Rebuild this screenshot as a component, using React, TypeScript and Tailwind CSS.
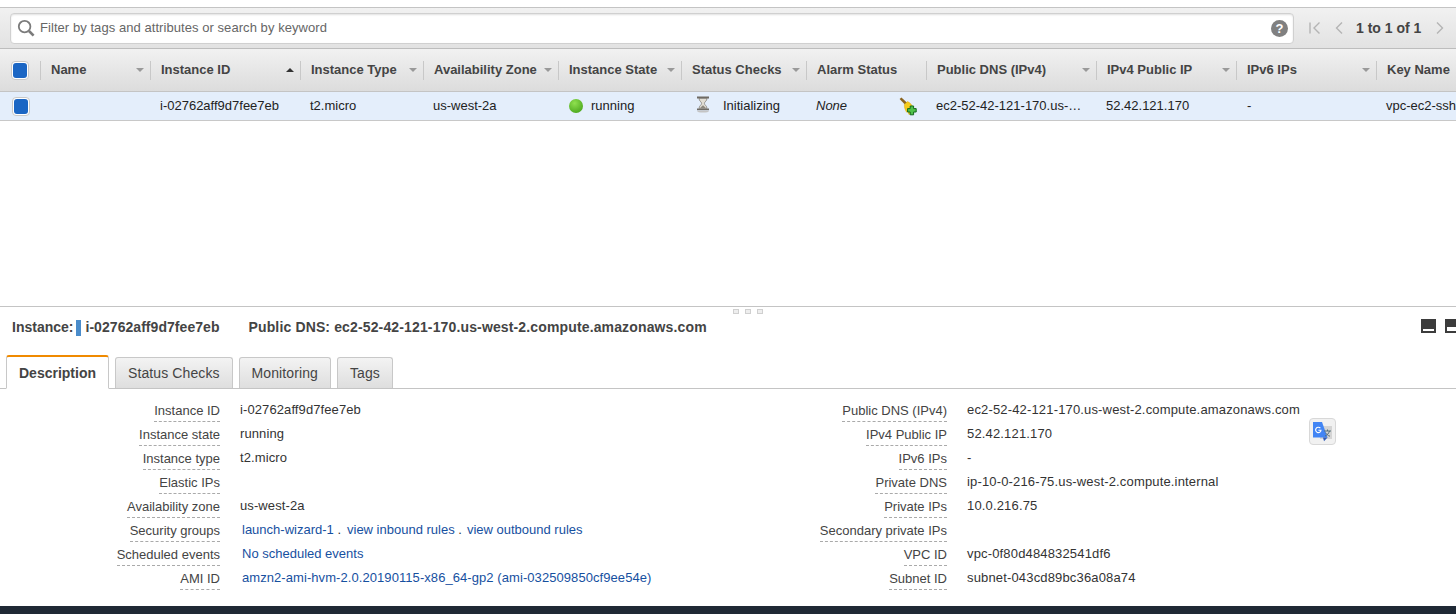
import React from "react";

const font = { fontFamily: '"Liberation Sans", Arial, sans-serif' };

const columns = [
  { label: "Name", width: "w-[110px]", sort: "down" },
  { label: "Instance ID", width: "w-[150px]", sort: "up" },
  { label: "Instance Type", width: "w-[123px]", sort: "down" },
  { label: "Availability Zone", width: "w-[135px]", sort: "down" },
  { label: "Instance State", width: "w-[123px]", sort: "down" },
  { label: "Status Checks", width: "w-[125px]", sort: "down" },
  { label: "Alarm Status", width: "w-[120px]", sort: "" },
  { label: "Public DNS (IPv4)", width: "w-[170px]", sort: "down" },
  { label: "IPv4 Public IP", width: "w-[140px]", sort: "down" },
  { label: "IPv6 IPs", width: "w-[140px]", sort: "down" },
  { label: "Key Name", width: "w-[140px]", sort: "" },
];

const leftRows = [
  ["Instance ID", "i-02762aff9d7fee7eb"],
  ["Instance state", "running"],
  ["Instance type", "t2.micro"],
  ["Elastic IPs", ""],
  ["Availability zone", "us-west-2a"],
];

const rightRows = [
  ["Public DNS (IPv4)", "ec2-52-42-121-170.us-west-2.compute.amazonaws.com"],
  ["IPv4 Public IP", "52.42.121.170"],
  ["IPv6 IPs", "-"],
  ["Private DNS", "ip-10-0-216-75.us-west-2.compute.internal"],
  ["Private IPs", "10.0.216.75"],
  ["Secondary private IPs", ""],
  ["VPC ID", "vpc-0f80d484832541df6"],
  ["Subnet ID", "subnet-043cd89bc36a08a74"],
  ["Network interfaces", "eth0"],
];

function Check() {
  return (
    <div className="w-[18px] h-[19px] rounded-[4px] bg-white border border-[#c8c8c8] flex items-center justify-center">
      <div className="w-[14px] h-[15px] rounded-[3px] bg-[#1b66c4]" />
    </div>
  );
}

function Label({ text }: { text: string }) {
  return (
    <div className="w-[220px] shrink-0 flex justify-end">
      <span className="h-[23px] pt-[3px] leading-[17px] text-[#444] border-b border-dashed border-[#aaa]">{text}</span>
    </div>
  );
}

function Hourglass() {
  return (
    <svg width="14" height="17" viewBox="0 0 14 17">
      <path d="M1 .6h12v1.8H1zM1 12.4h12v1.8H1z" fill="#6f6b64" />
      <path d="M3 2.4h8c0 2.6-2.6 3.4-2.6 5s2.6 2.4 2.6 5H3c0-2.6 2.6-3.4 2.6-5S3 5 3 2.4z" fill="#e2ded4" stroke="#77736b" strokeWidth="0.7" />
      <path d="M4.2 12.2c.6-1.6 2.2-2.2 2.8-3 .6.8 2.2 1.4 2.8 3z" fill="#8d887e" />
      <ellipse cx="7" cy="15.6" rx="6" ry="0.9" fill="#c4c4c4" />
    </svg>
  );
}

function AlarmIcon() {
  return (
    <svg width="19" height="19" viewBox="0 0 19 19">
      <path d="M.6 2 2.4.6 8.4 6 6.4 8z" fill="#8a6420" />
      <path d="M5.4 7.4 8.6 4.6C11 5.8 13.4 8 14 11L12 16.4 10 17.6 8.6 14.4 7.6 15.2C6 12.6 5.2 10 5.4 7.4z" fill="#f5cb1c" stroke="#d9a60e" strokeWidth="0.5" />
      <path d="M11.2 9h3.4v2.6h2.6V15h-2.6v2.8h-3.4V15H8.6v-3.4h2.6z" fill="#4fc24a" stroke="#14691c" strokeWidth="1" />
    </svg>
  );
}

function TranslateIcon() {
  return (
    <svg width="20" height="20" viewBox="0 0 20 20">
      <rect x="7" y="4" width="12" height="13" fill="#d4d4d4" />
      <path d="M0 0h9l5.5 15.5H0z" fill="#4285f4" />
      <path d="M10 15.5h4.5l-3.5 3.8z" fill="#2f5bb7" />
      <path d="M7.4 6.2A2.7 2.7 0 1 0 8 8.2H5.4" fill="none" stroke="#fff" strokeWidth="1.1" />
      <path d="M11 9h7M14.5 7.5v1.5M16.5 9c-.8 2.6-2.4 4.2-4.5 5M12.6 10.6c.8 1.6 2.2 3 4.4 3.6" fill="none" stroke="#55707a" strokeWidth="1" />
    </svg>
  );
}

export default function App() {
  return (
    <div className="w-[1456px] h-[614px] overflow-hidden bg-white flex flex-col relative text-[13px] text-[#333]" style={font}>
      <div className="h-[7px] shrink-0 bg-white" />

      {/* Filter bar */}
      <div className="h-[42px] shrink-0 border-t border-b border-t-[#c4c4c4] border-b-[#bdbdbd] bg-gradient-to-b from-[#f1f1f1] to-[#e2e2e2] flex items-center pl-[10px]">
        <div className="w-[1284px] h-[31px] bg-white border border-[#d0d0d0] rounded-[4px] flex items-center pl-[6px] pr-[5px] shadow-[inset_0_1px_2px_rgba(0,0,0,0.12)]">
          <svg width="18" height="18" viewBox="0 0 18 18" fill="none" stroke="#7b7b7b">
            <circle cx="7.6" cy="7.6" r="5.8" strokeWidth="1.8" />
            <path d="M12 12l4.6 4.6" strokeWidth="2.6" />
          </svg>
          <span className="ml-[5px] text-[#666] tracking-[0.06px]">Filter by tags and attributes or search by keyword</span>
          <div className="ml-auto w-[17px] h-[17px] rounded-full bg-[#808080] flex items-center justify-center text-white font-bold text-[13px] leading-none">?</div>
        </div>
        <div className="ml-[14px] flex items-center">
          <svg width="14" height="14" viewBox="0 0 14 14" fill="none" stroke="#b4b4b4" strokeWidth="1.4">
            <path d="M2 1.5v11M11.5 1.5 6 7l5.5 5.5" />
          </svg>
          <svg className="ml-[10px]" width="14" height="14" viewBox="0 0 14 14" fill="none" stroke="#b4b4b4" strokeWidth="1.4">
            <path d="M10 1.5 4.5 7l5.5 5.5" />
          </svg>
          <span className="ml-[10px] font-bold text-[14px] text-[#444]">1 to 1 of 1</span>
          <svg className="ml-[12px]" width="14" height="14" viewBox="0 0 14 14" fill="none" stroke="#b4b4b4" strokeWidth="1.4">
            <path d="M4 1.5 9.5 7 4 12.5" />
          </svg>
        </div>
      </div>

      {/* Table header */}
      <div className="h-[43px] shrink-0 border-b border-[#c4c4c4] bg-gradient-to-b from-[#f1f1f1] to-[#dcdcdc] flex items-center">
        <div className="w-[40px] shrink-0 pl-[11px] flex items-center">
          <Check />
        </div>
        {columns.map((c) => (
          <div key={c.label} className={`${c.width} shrink-0 h-[19px] border-l border-[#c8c8c8] pl-[10px] pr-[6px] flex items-center justify-between`}>
            <span className="font-bold text-[#444] whitespace-nowrap">{c.label}</span>
            {c.sort === "down" && <span className="w-0 h-0 border-x-[4px] border-x-transparent border-t-[4px] border-t-[#999]" />}
            {c.sort === "up" && <span className="w-0 h-0 border-x-[4px] border-x-transparent border-b-[4px] border-b-[#333]" />}
          </div>
        ))}
      </div>

      {/* Selected row */}
      <div className="h-[29px] shrink-0 border-b border-[#c8c8c8] bg-[#e4eefb] flex items-center text-[#222]">
        <div className="w-[40px] shrink-0 pl-[12px] flex items-center">
          <Check />
        </div>
        <div className="w-[110px] shrink-0" />
        <div className="w-[150px] shrink-0 pl-[10px]">i-02762aff9d7fee7eb</div>
        <div className="w-[123px] shrink-0 pl-[10px]">t2.micro</div>
        <div className="w-[135px] shrink-0 pl-[10px]">us-west-2a</div>
        <div className="w-[123px] shrink-0 pl-[11px] flex items-center gap-[8px]">
          <span className="w-[14px] h-[14px] rounded-full bg-[radial-gradient(circle_at_40%_30%,#8fe04f,#3c9a12)]" />
          running
        </div>
        <div className="w-[125px] shrink-0 pl-[15px] flex items-center gap-[13px]">
          <span className="-mt-[3px]"><Hourglass /></span>
          Initializing
        </div>
        <div className="w-[120px] shrink-0 pl-[10px] flex items-center justify-between pr-[8px]">
          <span className="italic">None</span>
          <AlarmIcon />
        </div>
        <div className="w-[170px] shrink-0 pl-[10px]">ec2-52-42-121-170.us-…</div>
        <div className="w-[140px] shrink-0 pl-[10px]">52.42.121.170</div>
        <div className="w-[140px] shrink-0 pl-[11px]">-</div>
        <div className="w-[140px] shrink-0 pl-[10px] whitespace-nowrap">vpc-ec2-ssh</div>
      </div>

      <div className="flex-1 min-h-0" />

      {/* Details pane */}
      <div className="h-[308px] shrink-0 border-t border-[#c4c4c4] flex flex-col relative">
        <div className="absolute left-[733px] top-[2px] flex gap-[6px]">
          <span className="w-[6px] h-[5px] border border-[#d0d0d0] bg-[#eeeeee]" />
          <span className="w-[6px] h-[5px] border border-[#d0d0d0] bg-[#eeeeee]" />
          <span className="w-[6px] h-[5px] border border-[#d0d0d0] bg-[#eeeeee]" />
        </div>
        <div className="h-[41px] shrink-0 flex items-center pl-[12px] font-bold text-[14px] text-[#444] whitespace-nowrap">
          <span>Instance:</span>
          <span className="ml-[3px] w-[5px] h-[16px] bg-[#4a8ccb]" />
          <span className="ml-[4px] tracking-[0.05px]">i-02762aff9d7fee7eb</span>
          <span className="ml-[29px] tracking-[0.14px]">Public DNS: ec2-52-42-121-170.us-west-2.compute.amazonaws.com</span>
          <div className="absolute left-[1421px] top-[12px] flex gap-[9px]">
            <div className="w-[15px] h-[14px] bg-[#3c3c3c] flex items-end justify-center pb-[2px]">
              <div className="w-[11px] h-[2px] bg-white" />
            </div>
            <div className="w-[15px] h-[14px] bg-[#3c3c3c] flex items-end justify-end pb-[2px]">
              <div className="w-[13px] h-[4px] bg-white" />
            </div>
          </div>
        </div>

        {/* Tabs */}
        <div className="h-[41px] shrink-0 pl-[6px] flex items-end gap-[6px] border-b border-[#c4c4c4] text-[14px]">
          <div className="h-[34px] px-[12px] pt-[1px] -mb-px bg-white border border-[#c8c8c8] border-t-2 border-t-[#f08a00] border-b-white rounded-t-[3px] flex items-center font-bold text-[#444]">Description</div>
          <div className="h-[31px] px-[12px] tracking-[0.1px] bg-gradient-to-b from-[#f3f3f3] to-[#dedede] border border-b-0 border-[#c8c8c8] rounded-t-[3px] flex items-center text-[#444]">Status Checks</div>
          <div className="h-[31px] px-[12px] tracking-[0.1px] bg-gradient-to-b from-[#f3f3f3] to-[#dedede] border border-b-0 border-[#c8c8c8] rounded-t-[3px] flex items-center text-[#444]">Monitoring</div>
          <div className="h-[31px] px-[12px] tracking-[0.1px] bg-gradient-to-b from-[#f3f3f3] to-[#dedede] border border-b-0 border-[#c8c8c8] rounded-t-[3px] flex items-center text-[#444]">Tags</div>
        </div>

        {/* Description grid */}
        <div className="h-[208px] shrink-0 overflow-hidden pt-[10px] flex">
          <div className="w-[727px] shrink-0 flex flex-col">
            {leftRows.map(([k, v]) => (
              <div key={k} className="h-[24px] shrink-0 flex">
                <Label text={k} />
                <span className="ml-[20px] leading-[22px] tracking-[0.1px] text-[#333]">{v}</span>
              </div>
            ))}
            <div className="h-[24px] shrink-0 flex">
              <Label text="Security groups" />
              <span className="ml-[22px] leading-[22px] text-[#16509f] whitespace-nowrap">
                launch-wizard-1<span className="text-[#333]"> .</span><span className="ml-[6px]">view inbound rules</span><span className="text-[#333]"> .</span><span className="ml-[5px]">view outbound rules</span>
              </span>
            </div>
            <div className="h-[24px] shrink-0 flex">
              <Label text="Scheduled events" />
              <span className="ml-[22px] leading-[22px] text-[#16509f]">No scheduled events</span>
            </div>
            <div className="h-[24px] shrink-0 flex">
              <Label text="AMI ID" />
              <span className="ml-[22px] leading-[22px] tracking-[0.07px] text-[#16509f]">amzn2-ami-hvm-2.0.20190115-x86_64-gp2 (ami-032509850cf9ee54e)</span>
            </div>
          </div>
          <div className="flex-1 flex flex-col">
            {rightRows.map(([k, v]) => (
              <div key={k} className="h-[24px] shrink-0 flex">
                <Label text={k} />
                <span className="ml-[20px] leading-[22px] tracking-[0.16px] text-[#333]">{v}</span>
              </div>
            ))}
          </div>
        </div>

        {/* Browser translate button */}
        <div className="absolute left-[1309px] top-[111px] w-[27px] h-[27px] rounded-[4px] border border-[#d8d8d8] bg-[#f1f1f1] flex items-center justify-center">
          <TranslateIcon />
        </div>

        <div className="flex-1" />
        <div className="h-[8px] shrink-0 bg-[#1f2935]" />
      </div>
    </div>
  );
}
